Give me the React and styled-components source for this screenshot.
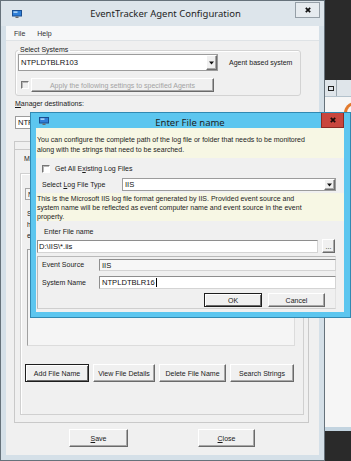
import React from 'react';
import styled, { createGlobalStyle } from 'styled-components';

const GlobalStyle = createGlobalStyle`
  html, body {
    margin: 0;
    padding: 0;
    background: #2b2b2b;
  }
  * {
    box-sizing: border-box;
  }
`;

const Desktop = styled.div`
  position: relative;
  width: 351px;
  height: 461px;
  display: flex;
  overflow: hidden;
  background: #2b2b2b;
  font-family: "Liberation Sans", Arial, sans-serif;
  font-size: 7px;
  color: #1a1a1a;
`;

/* ---------- main window ---------- */

const MainWindow = styled.div`
  width: 325px;
  height: 461px;
  flex-shrink: 0;
  display: flex;
  flex-direction: column;
  background: #d5e0e8;
  border: 1px solid #66727b;
  padding: 0 5px 5px;
`;

const TitleBar = styled.div`
  height: 25px;
  display: grid;
  grid-template-columns: 1fr auto 1fr;
  align-items: start;
  margin: 0 -5px;
  padding: 0 4px 0 10px;
  background: #dde5eb;
`;

const TitleIcon = styled.span`
  display: flex;
  padding-top: ${p => p.$top || 0}px;
  margin-left: ${p => p.$left || 0}px;
`;

const TitleText = styled.div`
  font-family: "Noto Sans", "Open Sans", sans-serif;
  font-size: ${p => p.$size || 9.5}px;
  line-height: ${p => p.$lh || 25}px;
  color: #1e1e1e;
  white-space: nowrap;
`;

const CloseBox = styled.span`
  justify-self: end;
  width: ${p => p.$w}px;
  height: ${p => p.$h}px;
  margin-top: ${p => p.$top || 0}px;
  display: flex;
  align-items: center;
  justify-content: center;
  background: ${p => (p.$active ? '#c9463d' : '#e6ebef')};
  border: 1px solid ${p => (p.$active ? '#8c2b24' : '#959fa7')};
  border-top: ${p => (p.$active ? 'none' : '')};
`;

const MenuBar = styled.div`
  height: 15px;
  display: flex;
  align-items: center;
  gap: 12px;
  padding-left: 8px;
  background: #f6f7f8;
  border-bottom: 1px solid #dfe3e6;
  color: #333;
`;

const Body = styled.div`
  flex: 1;
  display: flex;
  flex-direction: column;
  background: #f0f0f0;
  padding: 5px 0 0 9px;
`;

const Group = styled.fieldset`
  margin: 0;
  width: ${p => p.$w}px;
  padding: ${p => p.$pad};
  border: 1px solid #d3d3d3;
  border-radius: 3px;
  box-shadow: inset 1px 1px 0 #ffffff;
  min-width: 0;
`;

const Legend = styled.legend`
  padding: 0 2px;
  line-height: 8px;
  color: #1a1a1a;
`;

const Row = styled.div`
  display: flex;
  align-items: center;
  gap: ${p => p.$gap || 0}px;
  margin-top: ${p => p.$mt || 0}px;
  margin-left: ${p => p.$ml || 0}px;
  height: ${p => (p.$h ? `${p.$h}px` : 'auto')};
`;

const Label = styled.span`
  white-space: nowrap;
  width: ${p => (p.$w ? `${p.$w}px` : 'auto')};
  flex-shrink: 0;
  padding-left: ${p => p.$pl || 0}px;
  line-height: ${p => p.$lh || 8}px;
  margin-top: ${p => p.$mt || 0}px;
  color: ${p => p.$color || '#1a1a1a'};
`;

const Combo = styled.div`
  width: ${p => p.$w}px;
  height: ${p => p.$h}px;
  flex-shrink: 0;
  display: flex;
  align-items: stretch;
  background: #ffffff;
  border: 1px solid #9c9c9c;
`;

const FieldValue = styled.span`
  flex: 1;
  display: flex;
  align-items: center;
  padding-left: ${p => p.$pl || 2}px;
  font-size: 7.6px;
  white-space: nowrap;
  overflow: hidden;
  color: #111;
`;

const DropButton = styled.span`
  width: 11px;
  display: flex;
  align-items: center;
  justify-content: center;
  background: #f0f0f0;
  border: 1px solid;
  border-color: #ffffff #6e6e6e #6e6e6e #ffffff;
  box-shadow: inset -1px -1px 0 #a8a8a8;
`;

const CheckBox = styled.span`
  display: inline-block;
  width: 8px;
  height: 8px;
  flex-shrink: 0;
  background: ${p => (p.$disabled ? '#f0f0f0' : '#ffffff')};
  border: 1px solid;
  border-color: #777777 #ffffff #ffffff #777777;
  box-shadow: inset 1px 1px 0 #b8b8b8;
`;

const WinButton = styled.button`
  width: ${p => p.$w}px;
  height: ${p => p.$h || 18}px;
  flex-shrink: 0;
  padding: 0;
  font-family: inherit;
  font-size: 7px;
  line-height: 1;
  white-space: nowrap;
  color: ${p => (p.disabled ? '#a3a3a3' : '#1a1a1a')};
  background: #f0f0f0;
  border: 1px solid;
  border-color: ${p => (p.$default ? '#1e1e1e' : '#ffffff #6a6a6a #6a6a6a #ffffff')};
  box-shadow: ${p =>
    p.$default
      ? 'inset 1px 1px 0 #ffffff, inset -1px -1px 0 #6a6a6a'
      : 'inset -1px -1px 0 #a8a8a8'};
`;

const Accel = styled.span`
  text-decoration: underline;
`;

const TabFrame = styled.div`
  margin: 12px 0 0 -1px;
  width: 295px;
  height: 282px;
  border: 1px solid #c9c9c9;
  padding: 7px 0 0 0;
  display: flex;
  flex-direction: column;
`;

const TabStrip = styled.div`
  display: flex;
  height: 17px;
`;

const Tab = styled.span`
  display: flex;
  align-items: center;
  padding: 0 10px 0 9px;
  border: 1px solid #c9c9c9;
  border-left: none;
  border-bottom: none;
  background: #f0f0f0;
`;

const InnerGroup = styled.div`
  margin: 7px 0 0 5px;
  width: 284px;
  height: 242px;
  border: 1px solid #d0d0d0;
  box-shadow: inset 1px 1px 0 #ffffff;
  padding: 14px 0 0 4px;
  display: flex;
  flex-direction: column;
`;

/* the rest of these controls sits under the dialog; only the first letters show */
const HeaderBox = styled.div`
  width: 150px;
  height: 12px;
  display: flex;
  align-items: center;
  padding-left: 2px;
  border: 1px solid #a6a6a6;
  background: #f4f4f4;
`;

const Notes = styled.div`
  margin: 8px 0 0 2px;
  line-height: 11px;
  white-space: pre-line;
`;

const ListBox = styled.div`
  margin: 8px 0 0 2px;
  width: 268px;
  height: 97px;
  border: 1px solid;
  border-color: #a0a0a0 #dcdcdc #dcdcdc #a0a0a0;
  background: #f5f5f5;
`;

const ButtonRow = styled.div`
  display: flex;
  gap: ${p => p.$gap || 4}px;
  margin: ${p => p.$m};
`;

/* ---------- right edge of the desktop ---------- */

const SideStrip = styled.div`
  flex: 1;
  display: flex;
  flex-direction: column;
`;

const DarkFill = styled.div`
  height: ${p => (p.$h ? `${p.$h}px` : 'auto')};
  flex: ${p => (p.$h ? 'none' : 1)};
  background: #2a2a2a;
`;

const OtherBar = styled.div`
  height: 17px;
  display: flex;
  background: #dfe5ea;
  border-bottom: 1px solid #b4c2cc;
`;

const MiniButton = styled.span`
  width: 12px;
  display: flex;
  align-items: center;
  justify-content: center;
  border-right: 1px solid #9ba6ae;
`;

const RestoreGlyph = styled.span`
  width: 6px;
  height: 5px;
  border: 1px solid #222;
`;

const OtherBody = styled.div`
  height: 330px;
  background: #f6f6f6;
  display: flex;
  justify-content: flex-end;
  align-items: flex-start;
`;

const BlueBand = styled.div`
  height: 4px;
  background: #c3d4e0;
`;

/* ---------- dialog ---------- */

const Dialog = styled.div`
  position: absolute;
  left: 30px;
  top: 112px;
  width: 321px;
  height: 206px;
  display: flex;
  flex-direction: column;
  background: #5cc6ef;
  border: 1px solid #3189b2;
  padding: 0 6px 5px 5px;
`;

const DialogTitle = styled.div`
  height: 15px;
  display: grid;
  grid-template-columns: 1fr auto 1fr;
  align-items: start;
`;

const DialogBody = styled.div`
  flex: 1;
  display: flex;
  flex-direction: column;
  background: #f0f0f0;
`;

const InfoBox = styled.div`
  margin-top: ${p => p.$mt || 0}px;
  height: ${p => p.$h}px;
  padding: ${p => p.$pt}px 2px 0 1px;
  line-height: ${p => p.$lh}px;
  background: #f7f7e4;
  white-space: pre-line;
  color: #1c1c1c;
`;

const TextInput = styled.div`
  width: ${p => p.$w}px;
  height: ${p => p.$h}px;
  flex-shrink: 0;
  display: flex;
  background: ${p => (p.$muted ? '#f7f7f7' : '#ffffff')};
  border: 1px solid;
  border-color: #8e8e8e #d4d4d4 #d4d4d4 #8e8e8e;
`;

const Caret = styled.span`
  display: inline-block;
  width: 1px;
  height: 9px;
  background: #000;
  margin-left: 1px;
`;

const FieldPanel = styled.div`
  margin: 3px 0 0 1px;
  width: 299px;
  height: 53px;
  border: 1px solid;
  border-color: #b9b9b9 #e2e2e2 #cfcfcf #b9b9b9;
  padding: 2px 0 0 4px;
  display: flex;
  flex-direction: column;
`;

const MonitorIcon = () => (
  <svg width="10" height="8" viewBox="0 0 10 8">
    <rect x="0.5" y="0.5" width="9" height="5.5" fill="#2f7fd8" stroke="#1b4f90" />
    <rect x="1.5" y="1.5" width="4" height="1.2" fill="#d8efff" />
    <rect x="3.5" y="6.5" width="3" height="1.5" fill="#6b6b6b" />
  </svg>
);

const CrossIcon = ({ size = 6, color = '#111' }) => (
  <svg width={size} height={size} viewBox="0 0 6 6">
    <path d="M0.8 0.8 L5.2 5.2 M5.2 0.8 L0.8 5.2" stroke={color} strokeWidth="1.7" />
  </svg>
);

const ArrowDown = () => (
  <svg width="5" height="4" viewBox="0 0 5 4">
    <path d="M0 0.5 H5 L2.5 3.5 Z" fill="#111" />
  </svg>
);

const App = () => {
  return (
    <Desktop>
      <GlobalStyle />
      <MainWindow>
        <TitleBar>
          <TitleIcon $top={9} $left={1}>
            <MonitorIcon />
          </TitleIcon>
          <TitleText>EventTracker Agent Configuration</TitleText>
          <CloseBox $w={25} $h={16} $top={1}>
            <CrossIcon />
          </CloseBox>
        </TitleBar>
        <MenuBar>
          <span>File</span>
          <span>Help</span>
        </MenuBar>
        <Body>
          <Group $w={286} $pad="0 6px 3px 2px">
            <Legend>Select Systems</Legend>
            <Row $gap={11}>
              <Combo $w={200} $h={17}>
                <FieldValue>NTPLDTBLR103</FieldValue>
                <DropButton>
                  <ArrowDown />
                </DropButton>
              </Combo>
              <Label>Agent based system</Label>
            </Row>
            <Row $mt={7} $gap={2} $ml={3}>
              <CheckBox $disabled />
              <WinButton $w={183} $h={14} disabled>
                Apply the following settings to specified Agents
              </WinButton>
            </Row>
          </Group>
          <Label $mt={4}>
            <Accel>M</Accel>anager destinations:
          </Label>
          <Row $mt={8}>
            <Combo $w={200} $h={13}>
              <FieldValue>NTPLDTBLR103</FieldValue>
              <DropButton>
                <ArrowDown />
              </DropButton>
            </Combo>
          </Row>
          <TabFrame>
            <TabStrip>
              <Tab>M</Tab>
            </TabStrip>
            <InnerGroup>
              <HeaderBox>N</HeaderBox>
              <Notes>{'S\nh\ne'}</Notes>
              <ListBox />
              <ButtonRow $m="18px 0 0 0" $gap={4}>
                <WinButton $w={64} $default>Add File Name</WinButton>
                <WinButton $w={62}>View File Details</WinButton>
                <WinButton $w={67}>Delete File Name</WinButton>
                <WinButton $w={64}>Search Strings</WinButton>
              </ButtonRow>
            </InnerGroup>
          </TabFrame>
          <ButtonRow $m="6px 0 0 54px" $gap={70}>
            <WinButton $w={59}>
              <Accel>S</Accel>ave
            </WinButton>
            <WinButton $w={57}>
              <Accel>C</Accel>lose
            </WinButton>
          </ButtonRow>
        </Body>
      </MainWindow>

      <SideStrip>
        <DarkFill $h={80} />
        <OtherBar>
          <MiniButton>
            <RestoreGlyph />
          </MiniButton>
        </OtherBar>
        <OtherBody>
          <svg width="10" height="16" viewBox="0 0 10 16">
            <circle cx="14" cy="16" r="11" fill="#e27a2c" />
            <circle cx="14" cy="16" r="8" fill="#f6f6f6" />
          </svg>
        </OtherBody>
        <BlueBand />
        <DarkFill />
      </SideStrip>

      <Dialog>
        <DialogTitle>
          <TitleIcon $top={4} $left={3}>
            <MonitorIcon />
          </TitleIcon>
          <TitleText $lh={19}>Enter File name</TitleText>
          <CloseBox $w={23} $h={15} $active>
            <CrossIcon color="#1a0a08" />
          </CloseBox>
        </DialogTitle>
        <DialogBody>
          <InfoBox $h={30} $pt={7} $lh={10}>
            {'You can configure the complete path of the log file or folder that needs to be monitored\nalong with the strings that need to be searched.'}
          </InfoBox>
          <Row $mt={5} $h={12} $gap={5} $ml={6}>
            <CheckBox />
            <Label>
              Get All E<Accel>x</Accel>isting Log Files
            </Label>
          </Row>
          <Row $mt={3}>
            <Label $w={86} $pl={6}>
              Select <Accel>L</Accel>og File Type
            </Label>
            <Combo $w={214} $h={13}>
              <FieldValue>IIS</FieldValue>
              <DropButton>
                <ArrowDown />
              </DropButton>
            </Combo>
          </Row>
          <InfoBox $mt={2} $h={28} $pt={1} $lh={9}>
            {'This is the Microsoft IIS log file format generated by IIS. Provided event source and\nsystem name will be reflected as event computer name and event source in the event\nproperty.'}
          </InfoBox>
          <Label $mt={7} $pl={8}>
            Enter File name
          </Label>
          <Row $mt={3} $gap={4} $ml={1}>
            <TextInput $w={281} $h={13}>
              <FieldValue $pl={1}>D:\IIS\*.iis</FieldValue>
            </TextInput>
            <WinButton $w={13} $h={14}>
              ...
            </WinButton>
          </Row>
          <FieldPanel>
            <Row>
              <Label $w={57}>Event Source</Label>
              <TextInput $w={237} $h={12} $muted>
                <FieldValue>IIS</FieldValue>
              </TextInput>
            </Row>
            <Row $mt={5}>
              <Label $w={57}>System Name</Label>
              <TextInput $w={237} $h={13}>
                <FieldValue>
                  NTPLDTBLR16
                  <Caret />
                </FieldValue>
              </TextInput>
            </Row>
            <ButtonRow $m="4px 0 0 162px" $gap={6}>
              <WinButton $w={58} $h={14} $default>
                OK
              </WinButton>
              <WinButton $w={57} $h={14}>
                Cancel
              </WinButton>
            </ButtonRow>
          </FieldPanel>
        </DialogBody>
      </Dialog>
    </Desktop>
  );
};

export default App;
